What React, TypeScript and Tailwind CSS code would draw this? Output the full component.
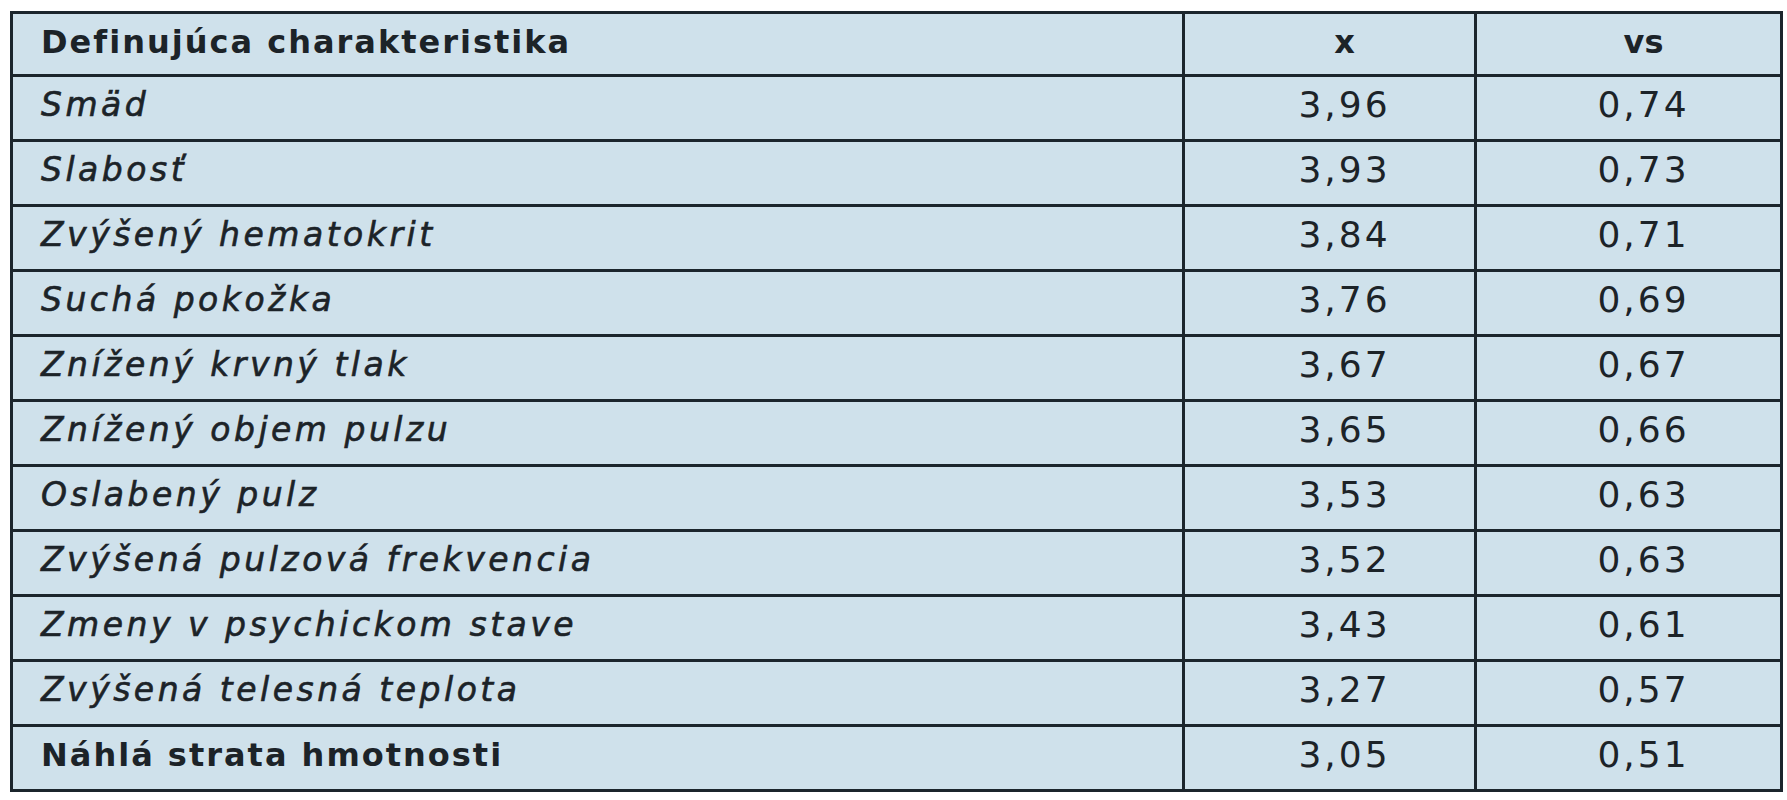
import React from "react";

const rows: [string, string, string, boolean][] = [
  ["Smäd", "3,96", "0,74", true],
  ["Slabosť", "3,93", "0,73", true],
  ["Zvýšený hematokrit", "3,84", "0,71", true],
  ["Suchá pokožka", "3,76", "0,69", true],
  ["Znížený krvný tlak", "3,67", "0,67", true],
  ["Znížený objem pulzu", "3,65", "0,66", true],
  ["Oslabený pulz", "3,53", "0,63", true],
  ["Zvýšená pulzová frekvencia", "3,52", "0,63", true],
  ["Zmeny v psychickom stave", "3,43", "0,61", true],
  ["Zvýšená telesná teplota", "3,27", "0,57", true],
  ["Náhlá strata hmotnosti", "3,05", "0,51", false],
];

export default function App() {
  return (
    <div
      className="w-[1787px] h-[800px] bg-white pt-[11px] pl-[10px]"
      style={{ fontFamily: '"DejaVu Sans", "Liberation Sans", sans-serif' }}
    >
      <table className="border-collapse border-[3px] border-[#1b252c] bg-[#cfe1eb] text-[#1c2328]">
        <colgroup>
          <col className="w-[1172px]" />
          <col className="w-[292px]" />
          <col className="w-[306px]" />
        </colgroup>
        <thead>
          <tr className="h-[63px]">
            <th className="border-[3px] border-[#1b252c] pl-[28px] pb-[4px] text-left align-middle text-[32px] font-bold tracking-[2px]">
              Definujúca charakteristika
            </th>
            <th className="border-[3px] border-[#1b252c] pl-[30px] pb-[4px] text-center align-middle text-[32px] font-bold">
              x
            </th>
            <th className="border-[3px] border-[#1b252c] pl-[30px] pb-[4px] text-center align-middle text-[32px] font-bold">
              vs
            </th>
          </tr>
        </thead>
        <tbody>
          {rows.map(([name, x, vs, italic]) => (
            <tr key={name} className="h-[65px]">
              <td
                className={
                  italic
                    ? "border-[3px] border-[#1b252c] pl-[28px] pb-[6px] text-left align-middle text-[33px] italic tracking-[3.5px] [-webkit-text-stroke:0.6px_#1c2328]"
                    : "border-[3px] border-[#1b252c] pl-[28px] pb-[6px] text-left align-middle text-[32px] font-bold tracking-[2px]"
                }
              >
                {name}
              </td>
              <td className="border-[3px] border-[#1b252c] pl-[30px] pb-[6px] text-center align-middle text-[36px] tracking-[3px]">
                {x}
              </td>
              <td className="border-[3px] border-[#1b252c] pl-[30px] pb-[6px] text-center align-middle text-[36px] tracking-[3px]">
                {vs}
              </td>
            </tr>
          ))}
        </tbody>
      </table>
    </div>
  );
}
